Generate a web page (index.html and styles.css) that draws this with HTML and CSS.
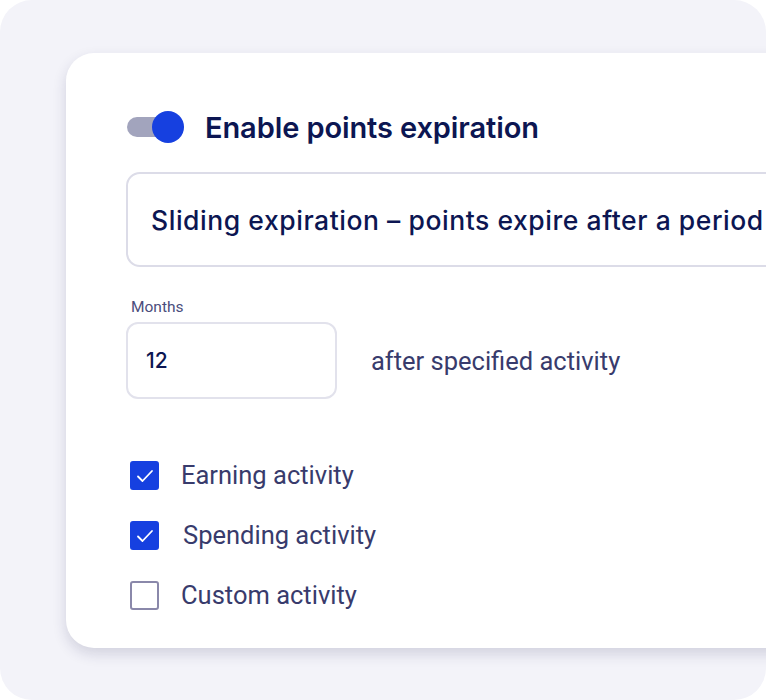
FILE: index.html
```html
<!DOCTYPE html>
<html lang="en">
<head>
    <meta charset="UTF-8">
    <meta name="viewport" content="width=device-width, initial-scale=1.0">
    <title>Points expiration</title>
    <link rel="stylesheet" href="styles.css">
</head>
<body>
    <div class="frame">
        <div class="card">
            <div class="toggle-row">
                <div class="toggle">
                    <div class="track"></div>
                    <div class="knob"></div>
                </div>
                <h1>Enable points expiration</h1>
            </div>
            <div class="select">Sliding expiration – points expire after a period</div>
            <div class="months">
                <label class="field-label">Months</label>
                <div class="months-row">
                    <div class="input">12</div>
                    <span class="after">after specified activity</span>
                </div>
            </div>
            <div class="checks">
                <div class="check">
                    <span class="box checked">
                        <svg width="18" height="14" viewBox="0 0 18 14"><path d="M2 7.5 L6.5 12 L16 2" fill="none" stroke="#fff" stroke-width="1.8" stroke-linecap="round" stroke-linejoin="round"/></svg>
                    </span>
                    <span class="check-label">Earning activity</span>
                </div>
                <div class="check">
                    <span class="box checked">
                        <svg width="18" height="14" viewBox="0 0 18 14"><path d="M2 7.5 L6.5 12 L16 2" fill="none" stroke="#fff" stroke-width="1.8" stroke-linecap="round" stroke-linejoin="round"/></svg>
                    </span>
                    <span class="check-label second">Spending activity</span>
                </div>
                <div class="check">
                    <span class="box"></span>
                    <span class="check-label">Custom activity</span>
                </div>
            </div>
        </div>
    </div>
</body>
</html>
```

FILE: styles.css
```css
body {
    margin: 0;
    background: #fff;
    font-family: Inter, "Noto Sans", sans-serif;
}
.frame {
    width: 766px;
    height: 700px;
    background: #f3f3f9;
    border-radius: 32px;
    overflow: hidden;
    padding: 53px 0 0 66px;
    box-sizing: border-box;
}
.card {
    width: 780px;
    height: 595px;
    background: #fff;
    border-radius: 28px;
    box-shadow: 0 6px 14px rgba(40, 40, 90, 0.16);
    padding: 58px 0 0 60px;
    box-sizing: border-box;
}
.toggle-row {
    display: flex;
    align-items: center;
    height: 32px;
}
.toggle {
    position: relative;
    width: 57px;
    height: 32px;
    margin-left: 1px;
}
.track {
    position: absolute;
    left: 0;
    top: 6px;
    width: 50px;
    height: 20px;
    border-radius: 10px;
    background: #a2a4bd;
}
.knob {
    position: absolute;
    right: 0;
    top: 0;
    width: 32px;
    height: 32px;
    border-radius: 50%;
    background: #1640e0;
}
h1 {
    margin: 0 0 0 21px;
    font-size: 29px;
    font-weight: 600;
    color: #0c1652;
    letter-spacing: -0.1px;
}
.select {
    margin-top: 29px;
    width: 700px;
    height: 95px;
    border: 2px solid #dcdce8;
    border-radius: 14px;
    box-sizing: border-box;
    display: flex;
    align-items: center;
    padding-left: 23px;
    font-size: 26.5px;
    font-weight: 500;
    letter-spacing: 0.55px;
    color: #0c1652;
    white-space: nowrap;
    overflow: hidden;
}
.months {
    margin-top: 31px;
}
.field-label {
    display: block;
    margin-left: 5px;
    font-family: Roboto, sans-serif;
    font-size: 15.5px;
    color: #4b4d7c;
    line-height: 18px;
}
.months-row {
    display: flex;
    align-items: center;
    margin-top: 6px;
}
.input {
    width: 211px;
    height: 77px;
    border: 2px solid #e2e2ec;
    border-radius: 12px;
    box-sizing: border-box;
    display: flex;
    align-items: center;
    padding-left: 18px;
    font-size: 21px;
    font-weight: 500;
    color: #0c1652;
}
.after {
    margin-left: 34px;
    font-family: Roboto, sans-serif;
    font-size: 25.5px;
    color: #383b6c;
}
.checks {
    margin-top: 62px;
    display: flex;
    flex-direction: column;
    gap: 31px;
}
.check {
    display: flex;
    align-items: center;
    height: 29px;
}
.box {
    width: 29px;
    height: 29px;
    margin-left: 4px;
    border: 2px solid #8a88aa;
    border-radius: 3px;
    box-sizing: border-box;
    display: flex;
    align-items: center;
    justify-content: center;
}
.box.checked {
    background: #1640e0;
    border-color: #1640e0;
}
.check-label {
    margin-left: 22px;
    margin-top: -2px;
    font-family: Roboto, sans-serif;
    font-size: 25.5px;
    color: #383b6c;
}
.check-label.second {
    margin-left: 24px;
}
```
